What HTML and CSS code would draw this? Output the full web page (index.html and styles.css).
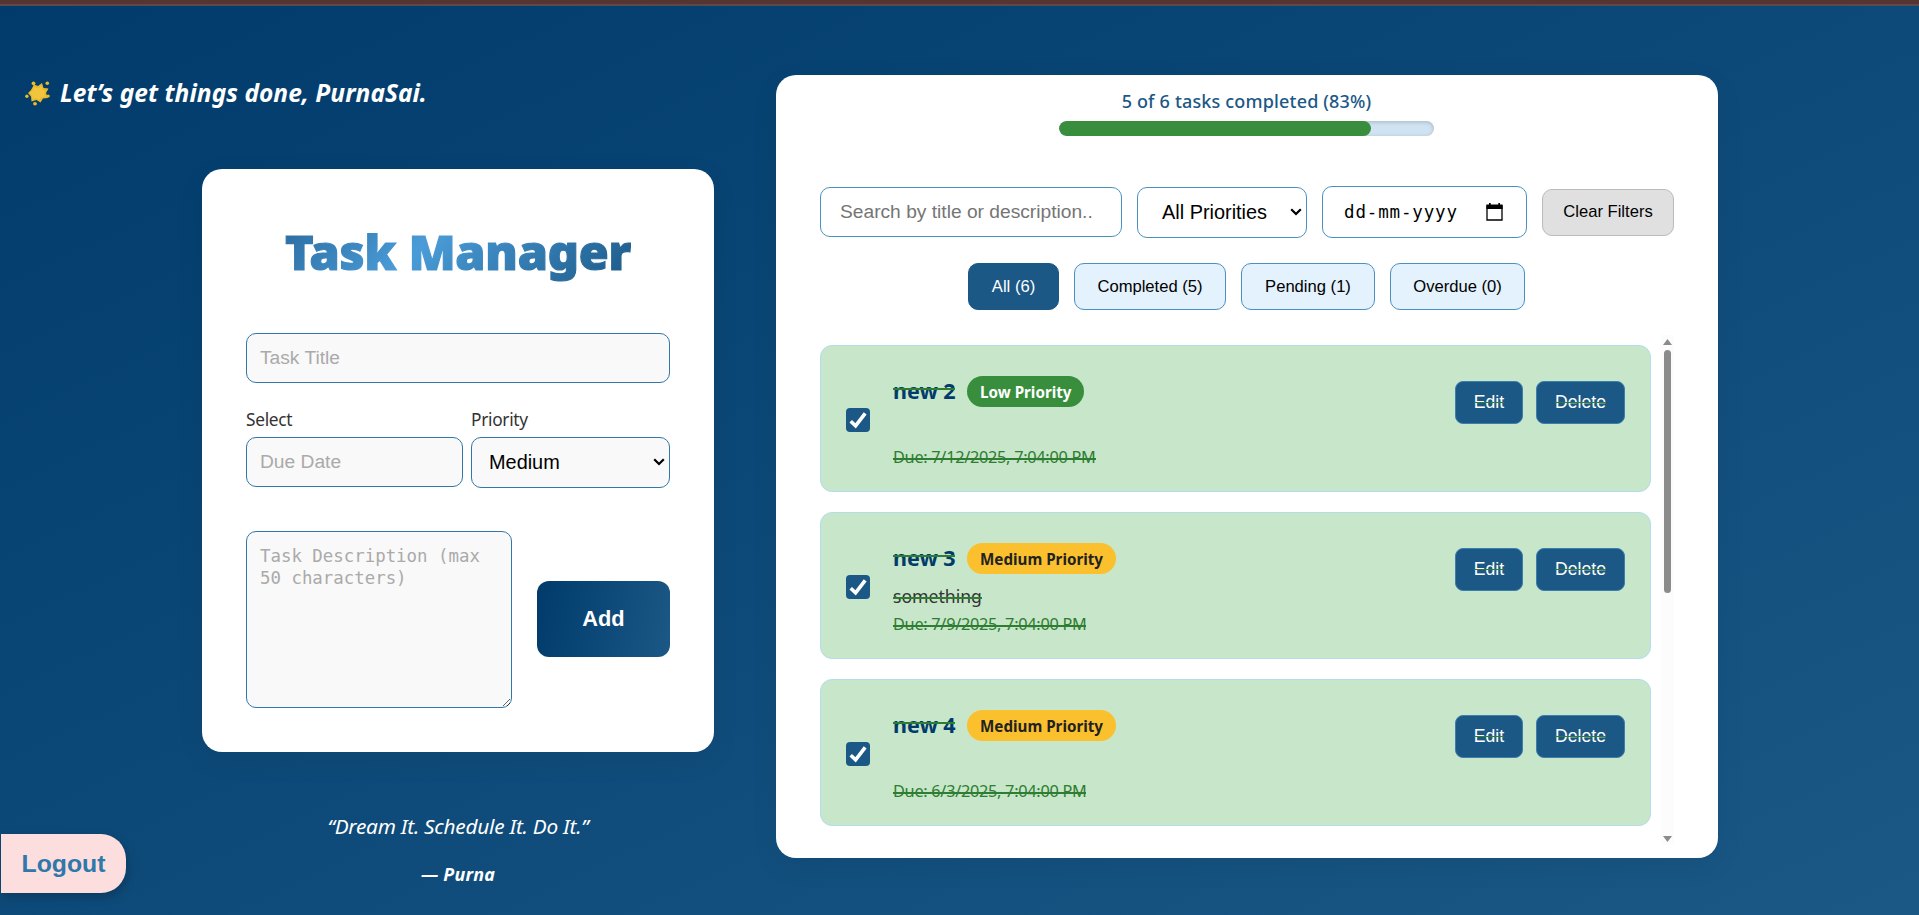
FILE: index.html
```
<!DOCTYPE html>
<html lang="en">
<head>
<meta charset="utf-8">
<title>Task Manager</title>
<link rel="stylesheet" href="styles.css">
</head>
<body>
<div class="topstrip"></div>
<div class="page">
  <section class="left">
    <h2 class="welcome">
      <svg class="star" viewBox="0 0 25 25"><g fill="#e9b92c"><path d="M9 3.500 13 5l4-3 1.500 5 5 .5-2.500 4.500 2 5-5 .5-2.500 4-4-2.500-5 1.500-.5-5-3-3.500 3-3z"/><circle cx="8.500" cy="2.300" r="1.900"/><circle cx="22.300" cy="2.200" r="1.800"/><circle cx="1.900" cy="15.200" r="1.700"/><circle cx="23.200" cy="15" r="1.600"/><ellipse cx="10" cy="22.800" rx="2" ry="1.800"/></g><path fill="#f4cb45" d="m9 6 4 1.500L16.500 5l1 4 3 .5-1.500 3 1 3.500-4 .5L14 19l-3-2-3.500 1-.5-4-2.500-2.500 3-1.500z" opacity=".7"/></svg>
      <span>Let’s get things done, PurnaSai.</span>
    </h2>
    <form class="card form">
      <h1 class="title"><span>Task Manager</span></h1>
      <input class="field" placeholder="Task Title">
      <div class="row">
        <label class="due"><span>Select</span><input class="field" placeholder="Due Date"></label>
        <label class="prio"><span>Priority</span><span class="select">Medium<svg class="chev" viewBox="0 0 12 8"><path d="M1.200 1.200 6 6l4.800-4.800"/></svg></span></label>
      </div>
      <div class="bottom">
        <textarea class="field" placeholder="Task Description (max 50 characters)"></textarea>
        <button type="button" class="add">Add</button>
      </div>
    </form>
    <blockquote class="quote">
      <p>“Dream It. Schedule It. Do It.”</p>
      <footer>— Purna</footer>
    </blockquote>
  </section>
  <section class="card board">
    <p class="status">5 of 6 tasks completed (83%)</p>
    <div class="bar"><div class="fill"></div></div>
    <div class="filters">
      <input class="ctl search" placeholder="Search by title or description..">
      <span class="ctl pick">All Priorities<svg class="chev" viewBox="0 0 12 8"><path d="M1.200 1.200 6 6l4.800-4.800"/></svg></span>
      <span class="ctl date"><span>dd-mm-yyyy</span><svg class="cal" viewBox="0 0 17 18"><path d="M1 3h15v14H1z" fill="none" stroke="#000" stroke-width="1.300"/><path d="M.4 1.500h16.200V6H.4zM3 0h1.700v2H3zM12.300 0H14v2h-1.700z"/></svg></span>
      <button class="clear">Clear Filters</button>
    </div>
    <div class="tabs">
      <button class="tab t1 on">All (6)</button><button class="tab t2">Completed (5)</button><button class="tab t3">Pending (1)</button><button class="tab t4">Overdue (0)</button>
    </div>
    <div class="listwrap">
      <ul class="list">
        <li class="task">
          <span class="check"><svg viewBox="0 0 24 24"><path d="m4.700 13.200 4.900 4.700L19.200 5.400"/></svg></span>
          <div class="info"><div class="head"><b class="name struck">new 2</b><span class="pill low">Low Priority</span></div><p class="desc"></p><p class="when"><span class="struck">Due: 7/12/2025, 7:04:00 PM</span></p></div>
          <div class="acts"><button class="act edit"><span>Edit</span></button><button class="act del"><span>Delete</span></button></div>
        </li>
        <li class="task">
          <span class="check"><svg viewBox="0 0 24 24"><path d="m4.700 13.200 4.900 4.700L19.200 5.400"/></svg></span>
          <div class="info"><div class="head"><b class="name struck">new 3</b><span class="pill med">Medium Priority</span></div><p class="desc"><span class="struck">something</span></p><p class="when"><span class="struck">Due: 7/9/2025, 7:04:00 PM</span></p></div>
          <div class="acts"><button class="act edit"><span>Edit</span></button><button class="act del"><span>Delete</span></button></div>
        </li>
        <li class="task">
          <span class="check"><svg viewBox="0 0 24 24"><path d="m4.700 13.200 4.900 4.700L19.200 5.400"/></svg></span>
          <div class="info"><div class="head"><b class="name struck">new 4</b><span class="pill med">Medium Priority</span></div><p class="desc"></p><p class="when"><span class="struck">Due: 6/3/2025, 7:04:00 PM</span></p></div>
          <div class="acts"><button class="act edit"><span>Edit</span></button><button class="act del"><span>Delete</span></button></div>
        </li>
      </ul>
      <div class="scroll"><svg class="arrow" viewBox="0 0 9 6"><path d="M4.500 0 9 6H0z"/></svg><div class="thumb"></div><svg class="arrow down" viewBox="0 0 9 6"><path d="M4.500 6 0 0h9z"/></svg></div>
    </div>
  </section>
</div>
<button class="logout">Logout</button>
</body>
</html>
```
FILE: styles.css
```
* { box-sizing: border-box; }
body {
  margin: 0;
  height: 915px;
  overflow: hidden;
  position: relative;
  font-family: "Noto Sans", "Open Sans", sans-serif;
  background: linear-gradient(to bottom right, #003b6b, #1b5886);
}
h1, h2, p, ul, blockquote { margin: 0; padding: 0; }
button, input { font-family: "Liberation Sans", Arial, sans-serif; }
.topstrip { height: 6px; background: #563433; border-bottom: 2px solid #5b4a45; }
.page { display: flex; align-items: flex-start; }
.left { width: 776px; flex: none; }
.card { background: #fff; border-radius: 20px; box-shadow: 0 8px 30px rgba(0, 0, 0, .06); }

.welcome {
  display: flex; align-items: center; gap: 10px;
  margin: 69px 0 0 25px; height: 36px;
  color: #fff; font-size: 24.500px; font-style: italic; font-weight: 700;
  letter-spacing: .04px; white-space: nowrap;
}
.welcome span { padding-bottom: 2px; }
.star { width: 25px; height: 25px; }

.form { width: 512px; height: 583px; margin: 58px 0 0 202px; padding: 44px; }
.title {
  height: 76px; line-height: 76px; margin-bottom: 44px; text-align: center;
  font-size: 48.500px; font-weight: 900; white-space: nowrap; letter-spacing: -.2px;
}
.title span {
  background: linear-gradient(135deg, #2a6a9e, #4a9cd8 40%, #1b5886);
  -webkit-background-clip: text; background-clip: text; color: transparent;
  -webkit-text-stroke: 1.200px transparent;
}
.field {
  display: block; width: 100%; height: 50px; padding: 0 13px;
  border: 1px solid #3277a8; border-radius: 10px; background: #f9f9f9;
  font-size: 19.200px; outline: 0;
}
.field::placeholder { color: #aaa; }
.row { display: flex; gap: 8px; margin-top: 23px; }
.row label { display: block; font-size: 17.300px; line-height: 28px; color: #333; height: 82px; }
.row label > span:first-child { display: block; width: max-content; margin-bottom: 3px; letter-spacing: -.3px; }
.due { width: 217px; }
.prio { width: 199px; }
.select {
  display: flex; align-items: center; justify-content: space-between;
  height: 51px; padding: 0 4px 1px 17px; border: 1px solid #3277a8; border-radius: 10px;
  background: #f9f9f9; color: #000; font: 19.900px "Liberation Sans", Arial, sans-serif;
}
.chev { width: 12px; height: 8px; fill: none; stroke: #000; stroke-width: 2.200; }
.bottom { display: flex; align-items: center; justify-content: space-between; margin-top: 43px; }
.bottom textarea {
  width: 266px; height: 177px; padding: 13px; resize: both;
  font: 17.400px/22px "DejaVu Sans Mono", monospace;
}
.add {
  width: 133px; height: 76px; margin-top: -1px; border: 0; border-radius: 12px; color: #fff;
  font-size: 21.800px; font-weight: 700; background: linear-gradient(100deg, #003b6b, #1b5886);
}
.quote { margin-left: 202px; width: 512px; text-align: center; color: #fff; font-style: italic; white-space: nowrap; }
.quote p { margin-top: 59px; height: 30px; line-height: 30px; font-size: 20.800px; letter-spacing: -.25px; }
.quote footer { margin-top: 18px; height: 30px; line-height: 30px; font-size: 17.900px; font-weight: 700; letter-spacing: .2px; }

.board { width: 942px; height: 783px; margin-top: 69px; padding: 13px 44px 0; }
.status { height: 26px; line-height: 26px; padding-right: 1px; text-align: center; color: #1b5886; font-size: 18px; font-weight: 500; letter-spacing: .17px; }
.bar { width: 375px; height: 15px; margin: 7px 0 0 239px; border-radius: 8px; background: #d0e3f2; box-shadow: inset 0 1px 4px rgba(0, 0, 0, .2); overflow: hidden; }
.fill { width: 83.300%; height: 100%; border-radius: 8px; background: #388e3c; }
.filters { display: flex; align-items: center; gap: 15px; margin-top: 50px; height: 52px; }
.ctl {
  display: flex; align-items: center; height: 50px; border: 1px solid #4a90c0; border-radius: 10px;
  background: #fff; color: #000; font: 19.200px "Liberation Sans", Arial, sans-serif;
}
.search { width: 302px; padding: 0 19px; }
.search::placeholder { color: #757575; }
.pick { width: 170px; height: 51px; padding: 0 4px 0 24px; justify-content: space-between; font-size: 19.900px; white-space: nowrap; }
.date { width: 205px; height: 52px; padding: 0 23px 0 21px; justify-content: space-between; letter-spacing: .85px; font: 17.500px "DejaVu Sans Mono", monospace; }
.cal { width: 17px; height: 18px; }
.clear { width: 132px; height: 47px; border: 1px solid #bbb; border-radius: 10px; background: #e0e0e0; font-size: 16.600px; padding: 0; }
.tabs { display: flex; justify-content: center; gap: 15px; margin-top: 25px; padding-right: 1px; }
.tab { height: 47px; padding: 0; border: 1px solid #4a90c0; border-radius: 10px; background: #e3f2fd; font-size: 16.600px; color: #000; }
.tab.on { background: #1b5886; border-color: #1b5886; color: #fff; }
.t1 { width: 91px; } .t2 { width: 152px; } .t3 { width: 134px; } .t4 { width: 135px; }

.listwrap { display: flex; justify-content: space-between; margin-top: 25px; height: 510px; }
.list { width: 831px; list-style: none; padding-top: 10px; display: flex; flex-direction: column; gap: 20px; }
.task { display: flex; height: 147px; padding: 0 25px; border: 1px solid #b3dcee; border-radius: 12px; background: #c8e6c9; }
.check { align-self: center; width: 24px; height: 24px; margin-top: 3px; border-radius: 4px; background: #1b5886; }
.check svg { display: block; fill: none; stroke: #fff; stroke-width: 3.600; }
.info { flex: 1; margin-left: 23px; padding-top: 30px; }
.head { display: flex; align-items: center; gap: 12px; height: 31px; }
.struck { position: relative; white-space: nowrap; display: inline-block; }
.struck::after { content: ""; position: absolute; left: 0; right: 0; height: 2px; background: #2e7d32; }
.name { width: 62px; height: 31px; line-height: 29px; color: #003b6b; font-size: 21.500px; }
.name::after { top: 12px; }
.pill { height: 31px; line-height: 32px; padding: 0 13px; border-radius: 16px; font-size: 15.200px; font-weight: 700; white-space: nowrap; }
.low { background: #388e3c; color: #fff; width: 117px; }
.med { background: #fbc02d; color: #222; width: 149px; }
.desc { height: 28px; line-height: 28px; margin-top: 8px; font-size: 17.600px; color: #333; }
.desc .struck::after { top: 15px; }
.when { height: 27px; line-height: 28px; font-size: 16.300px; letter-spacing: -.28px; color: #2e7d32; }
.when .struck::after { top: 15px; }
.acts { display: flex; gap: 13px; margin-top: 35px; height: 43px; }
.act { padding: 0; border: 1px solid #3a7fae; border-radius: 8px; background: #1b5886; color: #fff; font-size: 17.600px; }
.act span { text-decoration: line-through 1px #2e7d32; }
.edit { width: 68px; } .del { width: 89px; }
.scroll { width: 13px; display: flex; flex-direction: column; align-items: center; padding: 4px 0 3px; background: #fcfcfc; }
.arrow { width: 9px; height: 6px; fill: #8b8b8b; }
.thumb { width: 7px; height: 243px; margin: 5px 0 auto; border-radius: 4px; background: #8b8b8b; }

.logout {
  position: absolute; left: 1px; top: 834px; width: 125px; height: 59px; padding: 0;
  border: 0; border-radius: 0 25px 25px 0; background: #fddede; color: #2f78a9;
  font-size: 24.800px; font-weight: 700; box-shadow: 2px 4px 10px rgba(0, 0, 0, .2);
}
```
